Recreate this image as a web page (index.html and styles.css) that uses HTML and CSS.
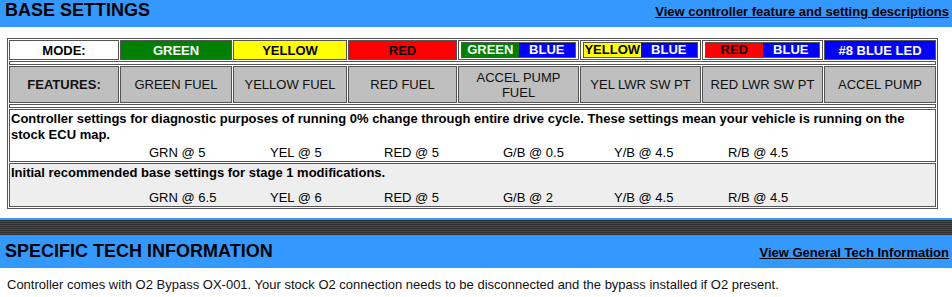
FILE: index.html
```html
<!DOCTYPE html>
<html>
<head>
<meta charset="utf-8">
<link rel="stylesheet" href="styles.css">
</head>
<body>
<div class="bar bar-top">
  <h2 class="bar-title">BASE SETTINGS</h2>
  <a class="bar-link" href="#">View controller feature and setting descriptions</a>
</div>

<table class="settings">
  <tr class="mode-row">
    <td class="c1 label">MODE:</td>
    <td class="c2 green">GREEN</td>
    <td class="c3 yellow">YELLOW</td>
    <td class="c4 red">RED</td>
    <td class="c5 combo"><div class="pair"><span class="half green">GREEN</span><span class="half blue">BLUE</span></div></td>
    <td class="c6 combo"><div class="pair"><span class="half yellow">YELLOW</span><span class="half blue">BLUE</span></div></td>
    <td class="c7 combo"><div class="pair"><span class="half red">RED</span><span class="half blue">BLUE</span></div></td>
    <td class="c8 blue">#8 BLUE LED</td>
  </tr>
  <tr class="thin-row"><td colspan="8"></td></tr>
  <tr class="feat-row">
    <td class="label">FEATURES:</td>
    <td>GREEN FUEL</td>
    <td>YELLOW FUEL</td>
    <td>RED FUEL</td>
    <td>ACCEL PUMP<br>FUEL</td>
    <td>YEL LWR SW PT</td>
    <td>RED LWR SW PT</td>
    <td>ACCEL PUMP</td>
  </tr>
  <tr class="thin-row"><td colspan="8"></td></tr>
  <tr class="info-row">
    <td colspan="8">
      <div class="info-text">Controller settings for diagnostic purposes of running 0% change through entire drive cycle. These settings mean your vehicle is running on the stock ECU map.</div>
      <div class="values">
        <span>GRN @ 5</span><span>YEL @ 5</span><span>RED @ 5</span><span>G/B @ 0.5</span><span>Y/B @ 4.5</span><span>R/B @ 4.5</span>
      </div>
    </td>
  </tr>
  <tr class="info-row alt">
    <td colspan="8">
      <div class="info-text">Initial recommended base settings for stage 1 modifications.</div>
      <div class="values">
        <span>GRN @ 6.5</span><span>YEL @ 6</span><span>RED @ 5</span><span>G/B @ 2</span><span>Y/B @ 4.5</span><span>R/B @ 4.5</span>
      </div>
    </td>
  </tr>
</table>

<div class="divider"></div>
<div class="bar bar-tech">
  <h2 class="bar-title">SPECIFIC TECH INFORMATION</h2>
  <a class="bar-link" href="#">View General Tech Information</a>
</div>
<p class="note">Controller comes with O2 Bypass OX-001. Your stock O2 connection needs to be disconnected and the bypass installed if O2 present.</p>
</body>
</html>
```

FILE: styles.css
```css
html, body {
  margin: 0;
  padding: 0;
  background: #fff;
  font-family: "Liberation Sans", Arial, sans-serif;
  font-size: 13px;
  color: #000;
}

.bar {
  display: flex;
  justify-content: space-between;
  align-items: baseline;
  background: #3399ff;
  padding: 0 3px 0 5px;
}
.bar-top {
  height: 27px;
}
.bar-title {
  margin: 0;
  font-size: 18px;
  line-height: 20px;
  font-weight: bold;
}
.bar-link {
  color: #000;
  font-weight: bold;
  font-size: 13px;
  text-decoration: underline;
}

.settings {
  margin: 11px 0 0 7px;
  border: 1px solid #555;
  border-collapse: separate;
  border-spacing: 1px;
  table-layout: fixed;
}
.settings td {
  box-sizing: border-box;
  border: 1px solid #555;
  padding: 1px;
  text-align: center;
  vertical-align: middle;
}
.c1 { width: 110px; }
.c2 { width: 112px; }
.c3 { width: 114px; }
.c4 { width: 109px; }
.c5 { width: 121px; }
.c6 { width: 121px; }
.c7 { width: 121px; }
.c8 { width: 112px; }

.mode-row td {
  height: 20px;
  font-weight: bold;
  line-height: 15px;
}
.label { font-weight: bold; background: #fff; }
.green { background: #008000; color: #fff; }
.yellow { background: #ffff00; color: #000; }
.red { background: #ff0000; color: #000; }
.blue { background: #0000ff; color: #fff; }

.settings td.combo {
  padding: 1px 2px;
  background: #fff;
}
.pair {
  display: flex;
  border: 1px solid #555;
}
.half {
  flex: 1 1 0;
  line-height: 14px;
  white-space: nowrap;
}

.thin-row td {
  height: 4px;
  padding: 0;
}

.feat-row td {
  height: 37px;
  background: #bfbfbf;
  line-height: 15px;
  color: #111;
}
.feat-row td.label { background: #bfbfbf; }

.info-row td {
  text-align: left;
  padding: 1px 1px 0;
}
.info-row.alt td { background: #eeeeee; }
.info-text {
  font-weight: bold;
  line-height: 16px;
}
.values {
  display: grid;
  grid-template-columns: 121px 114px 119px 111px 114px auto;
  padding-left: 138px;
  margin-top: 2px;
  line-height: 16px;
}
.alt .values { margin-top: 9px; }

.divider {
  margin-top: 9px;
  height: 15px;
  border-top: 2px solid #3399ff;
  background: repeating-linear-gradient(#2b2b2b 0 1px, #4a4a4a 1px 2px);
}
.bar-tech {
  height: 33px;
  padding-top: 6px;
  box-sizing: border-box;
}
.note {
  margin: 0;
  padding: 9px 0 0 7px;
  line-height: 16px;
  color: #111;
}
```
